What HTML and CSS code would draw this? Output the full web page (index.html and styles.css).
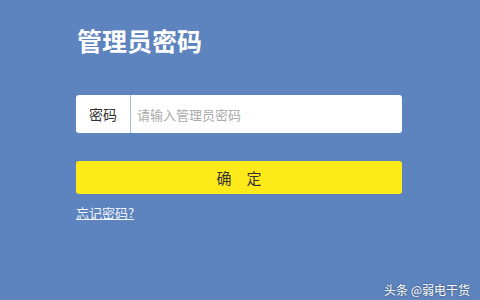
FILE: index.html
```html
<!DOCTYPE html>
<html lang="zh-CN">
<head>
  <meta charset="UTF-8" />
  <title>管理员密码</title>
  <link rel="stylesheet" href="styles.css">
</head>
<body>
  <div class="panel">
    <h1>管理员密码</h1>
    <div class="field">
      <span class="field-label">密码</span>
      <input class="field-input" type="password" placeholder="请输入管理员密码">
    </div>
    <button class="btn">确&emsp;定</button>
    <a class="forgot" href="#">忘记密码?</a>
  </div>
  <div class="watermark">头条 @弱电干货</div>
</body>
</html>
```

FILE: styles.css
```css
html, body {
  margin: 0;
  height: 100%;
}
body {
  background: #5d84be;
  font-family: "Noto Sans CJK SC", "Liberation Sans", sans-serif;
  position: relative;
  overflow: hidden;
}
.panel {
  width: 326px;
  padding: 24px 0 0 76px;
}
h1 {
  margin: 0 0 38px 1px;
  font-size: 25px;
  line-height: 33px;
  font-weight: bold;
  color: #fff;
}
.field {
  display: flex;
  height: 38px;
  background: #fff;
  border-radius: 3px;
}
.field-label {
  width: 54px;
  line-height: 38px;
  text-align: center;
  font-size: 14px;
  color: #333;
  border-right: 1px solid #a8bde0;
}
.field-input {
  flex: 1;
  border: none;
  outline: none;
  background: transparent;
  padding: 0 0 0 6px;
  font-family: inherit;
  font-size: 13px;
  color: #333;
}
.field-input::placeholder {
  color: #aaa;
}
.btn {
  display: block;
  width: 100%;
  height: 33px;
  margin-top: 28px;
  border: none;
  border-radius: 3px;
  background: #fdea18;
  color: #333;
  font-family: inherit;
  font-size: 15px;
  cursor: pointer;
}
.forgot {
  display: inline-block;
  margin-top: 9px;
  font-size: 13px;
  color: #f0f4ff;
}
.watermark {
  position: absolute;
  right: 10px;
  bottom: 2px;
  font-size: 12px;
  color: #fff;
  text-shadow: 0 0 2px rgba(0, 0, 0, 0.5);
}
```
